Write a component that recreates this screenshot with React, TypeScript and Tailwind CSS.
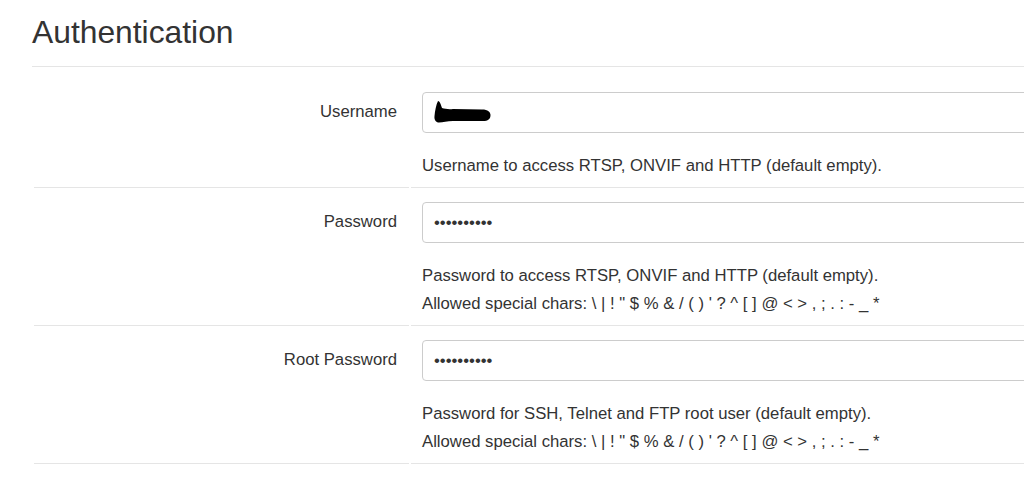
import React from 'react';

const SPECIAL = 'Allowed special chars: \\ | ! " $ % & / ( ) \' ? ^ [ ] @ < > , ; . : - _ *';

const fields = [
  {
    label: 'Username',
    type: 'text',
    value: '',
    help: ['Username to access RTSP, ONVIF and HTTP (default empty).'],
    redacted: true,
  },
  {
    label: 'Password',
    type: 'password',
    value: 'abcdefghij',
    help: ['Password to access RTSP, ONVIF and HTTP (default empty).', SPECIAL],
  },
  {
    label: 'Root Password',
    type: 'password',
    value: 'abcdefghij',
    help: ['Password for SSH, Telnet and FTP root user (default empty).', SPECIAL],
  },
];

// redaction scribble over the username value
const Scribble = () => (
  <svg
    className="absolute left-[11px] top-[8px]"
    width="58"
    height="24"
    viewBox="0 0 58 24"
  >
    <path
      d="M1.5 16 C2 11 3 5 5 1 C7 1 8 5 9 8 C12 9 16 9.5 20 9 L49 9.5 C55 9.5 57.5 12 57.5 15 C57.5 19 55 21 50 21 L20 21 C14 21 10 22.5 6 22.5 C3 22.5 1 20 1.5 16 Z"
      fill="#000"
    />
    <path d="M3 14 L9 14 L8 19 L3 19 Z" fill="#000" />
  </svg>
);

export default function App() {
  return (
    <div className="w-[1024px] h-[488px] overflow-hidden bg-white text-[#333] font-['Liberation_Sans',Arial,sans-serif]">
      <div className="pl-[32px]">
        <h2 className="mt-[15px] pb-[16px] border-b border-[#e5e5e5] text-[31.8px] leading-[35px] font-normal">
          Authentication
        </h2>

        <div className="mt-[11px] pl-[2px] grid grid-cols-[375px_720px] gap-x-[2px]">
          {fields.map((f) => (
            <React.Fragment key={f.label}>
              <div className="border-b border-[#e5e5e5] pt-[22px] pr-[12px] text-right text-[16.7px] leading-[24px]">
                {f.label}
              </div>
              <div className="border-b border-[#e5e5e5] pt-[14px] pb-[7px] pl-[11px]">
                <div className="relative">
                  <input
                    type={f.type}
                    defaultValue={f.value}
                    readOnly
                    className="block w-full h-[41px] px-[11px] border border-[#ccc] rounded-[4px] text-[16.7px] text-[#333] bg-white outline-none"
                  />
                  {f.redacted && <Scribble />}
                </div>
                <div className="mt-[19px] text-[16.7px] leading-[28px]">
                  {f.help.map((line) => (
                    <p key={line}>{line}</p>
                  ))}
                </div>
              </div>
            </React.Fragment>
          ))}
        </div>
      </div>
    </div>
  );
}
